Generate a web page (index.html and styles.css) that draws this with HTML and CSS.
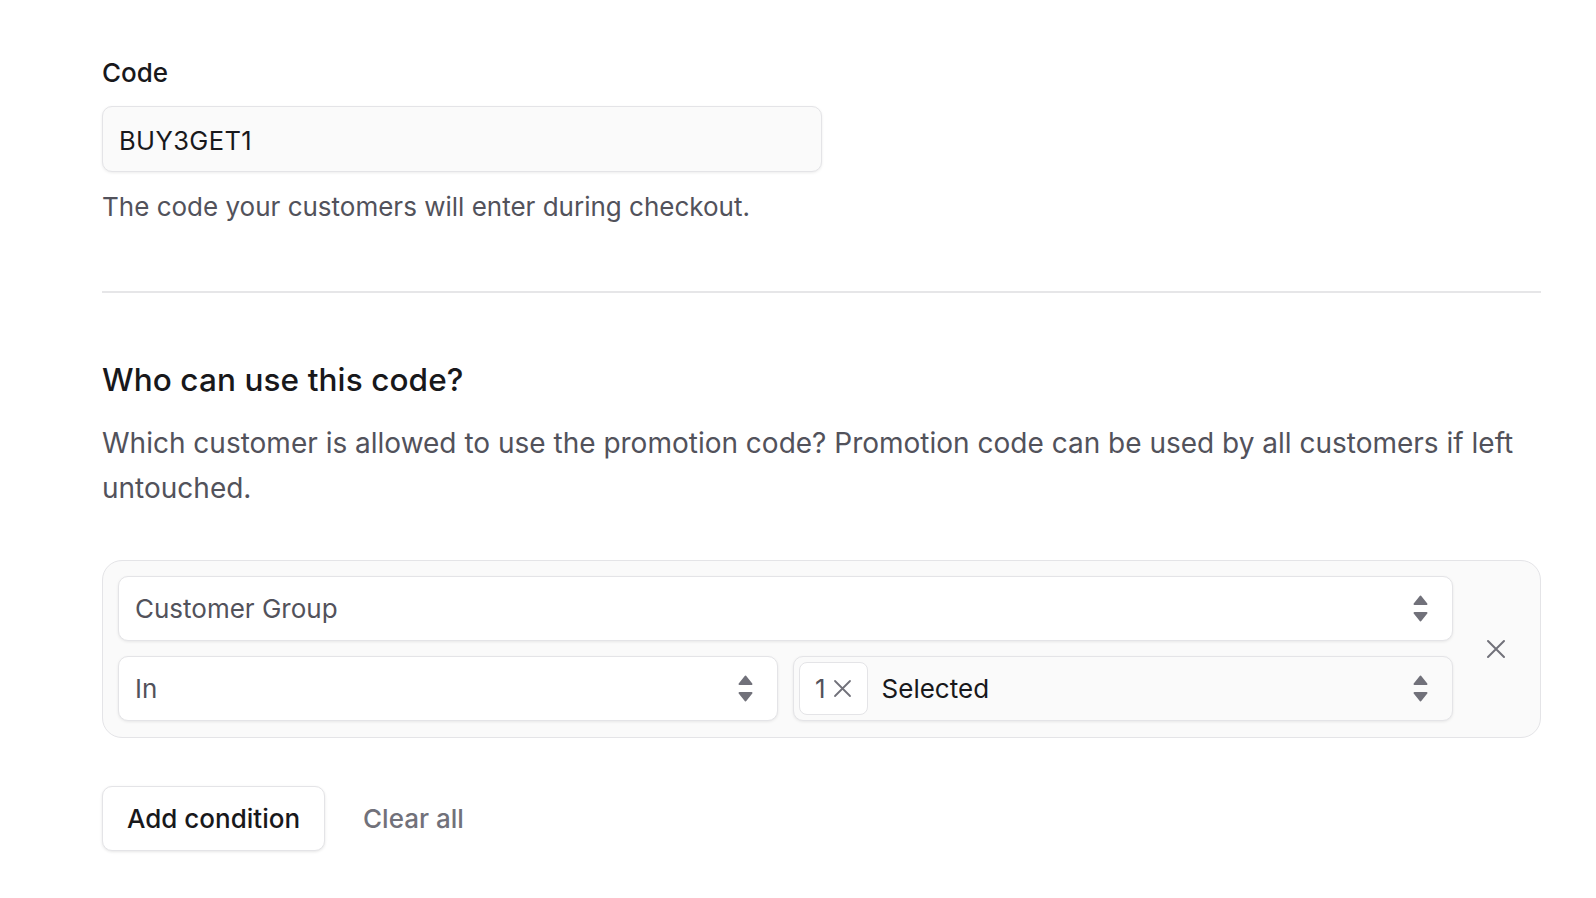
FILE: index.html
```html
<!DOCTYPE html>
<html lang="en">
<head>
    <meta charset="UTF-8">
    <meta name="viewport" content="width=device-width, initial-scale=1.0">
    <title>Promotion code</title>
    <link rel="stylesheet" href="styles.css">
</head>
<body>
    <main class="page">
        <section class="field">
            <label class="field-label" for="code">Code</label>
            <input class="text-input" id="code" type="text" value="BUY3GET1">
            <p class="hint">The code your customers will enter during checkout.</p>
        </section>

        <hr class="divider">

        <section class="rules">
            <h2 class="rules-title">Who can use this code?</h2>
            <p class="rules-desc">Which customer is allowed to use the promotion code? Promotion code can be used by all customers if left untouched.</p>

            <div class="condition">
                <div class="condition-fields">
                    <div class="select">
                        <span class="select-value">Customer Group</span>
                        <svg class="sort-icon" width="15" height="27" viewBox="0 0 15 27"><path d="M7.5 1.5L13.5 9H1.5Z"/><path d="M1.5 18H13.5L7.5 25.5Z"/></svg>
                    </div>
                    <div class="select-row">
                        <div class="select">
                            <span class="select-value">In</span>
                            <svg class="sort-icon" width="15" height="27" viewBox="0 0 15 27"><path d="M7.5 1.5L13.5 9H1.5Z"/><path d="M1.5 18H13.5L7.5 25.5Z"/></svg>
                        </div>
                        <div class="select select-multi">
                            <span class="chip">1
                                <svg width="19" height="19" viewBox="0 0 19 19"><path d="M2 2L17 17M17 2L2 17"/></svg>
                            </span>
                            <span class="select-value strong">Selected</span>
                            <svg class="sort-icon" width="15" height="27" viewBox="0 0 15 27"><path d="M7.5 1.5L13.5 9H1.5Z"/><path d="M1.5 18H13.5L7.5 25.5Z"/></svg>
                        </div>
                    </div>
                </div>
                <button class="remove-button" type="button" aria-label="Remove condition">
                    <svg width="20" height="20" viewBox="0 0 20 20"><path d="M2 2L18 18M18 2L2 18"/></svg>
                </button>
            </div>

            <div class="actions">
                <button class="button" type="button">Add condition</button>
                <button class="button-link" type="button">Clear all</button>
            </div>
        </section>
    </main>
</body>
</html>
```

FILE: styles.css
```css
body {
    margin: 0;
    background: #fff;
    font-family: Inter, "Noto Sans", sans-serif;
    color: #18181b;
}

.page {
    padding: 55px 55px 40px 102px;
}

.field-label {
    display: block;
    font-size: 26px;
    line-height: 35px;
    font-weight: 500;
    margin-bottom: 16px;
}

.text-input {
    display: block;
    box-sizing: border-box;
    width: 720px;
    height: 66px;
    margin: 0;
    padding: 3px 16px 0;
    border: 1px solid #e4e4e7;
    border-radius: 10px;
    background: #fafafa;
    box-shadow: 0 1px 3px rgba(0, 0, 0, 0.08);
    font-family: inherit;
    font-size: 25.5px;
    letter-spacing: 0.4px;
    color: #18181b;
    outline: none;
}

.hint {
    margin: 17px 0 0;
    font-size: 26px;
    line-height: 35px;
    color: #52525b;
}

.divider {
    margin: 67px 0 0;
    border: none;
    height: 2px;
    background: #e6e6e8;
}

.rules-title {
    margin: 67px 0 0;
    font-size: 31.5px;
    line-height: 40px;
    font-weight: 500;
    letter-spacing: 0.1px;
}

.rules-desc {
    margin: 21px 0 0;
    font-size: 28px;
    line-height: 45px;
    color: #52525b;
}

.condition {
    margin-top: 49px;
    display: flex;
    align-items: center;
    gap: 14px;
    padding: 15px 16px 16px 15px;
    border: 1px solid #e4e4e7;
    border-radius: 20px;
    background: #fafafa;
}

.condition-fields {
    flex: 1;
    display: flex;
    flex-direction: column;
    gap: 15px;
}

.select-row {
    display: grid;
    grid-template-columns: 1fr 1fr;
    gap: 15px;
}

.select {
    box-sizing: border-box;
    height: 65px;
    display: flex;
    align-items: center;
    padding: 0 24px 0 16px;
    border: 1px solid #e4e4e7;
    border-radius: 10px;
    background: #fff;
    box-shadow: 0 1px 3px rgba(0, 0, 0, 0.08);
    font-size: 26px;
    color: #52525b;
}

.select-value {
    flex: 1;
}

.select-value.strong {
    color: #18181b;
}

.select-multi {
    padding-left: 5px;
    background: #fafafa;
}

.sort-icon path {
    fill: #71717a;
    stroke: #71717a;
    stroke-width: 2;
    stroke-linejoin: round;
}

.chip {
    box-sizing: border-box;
    height: 53px;
    display: flex;
    align-items: center;
    gap: 7px;
    padding: 0 15px;
    margin-right: 14px;
    border: 1px solid #e4e4e7;
    border-radius: 8px;
    background: #fff;
    color: #52525b;
}

.chip svg path {
    stroke: #71717a;
    stroke-width: 1.8;
    stroke-linecap: round;
}

.remove-button {
    width: 57px;
    height: 57px;
    display: flex;
    align-items: center;
    justify-content: center;
    padding: 0;
    border: none;
    background: none;
    cursor: pointer;
}

.remove-button svg path {
    stroke: #71717a;
    stroke-width: 2;
    stroke-linecap: round;
}

.actions {
    margin-top: 48px;
    display: flex;
    align-items: center;
    gap: 14px;
}

.button {
    height: 65px;
    padding: 0 24px;
    border: 1px solid #e4e4e7;
    border-radius: 10px;
    background: #fff;
    box-shadow: 0 1px 3px rgba(0, 0, 0, 0.1);
    font-family: inherit;
    font-size: 26px;
    font-weight: 500;
    color: #18181b;
    cursor: pointer;
}

.button-link {
    height: 65px;
    padding: 0 24px;
    border: none;
    background: none;
    font-family: inherit;
    font-size: 26px;
    font-weight: 500;
    color: #71717a;
    cursor: pointer;
}
```
